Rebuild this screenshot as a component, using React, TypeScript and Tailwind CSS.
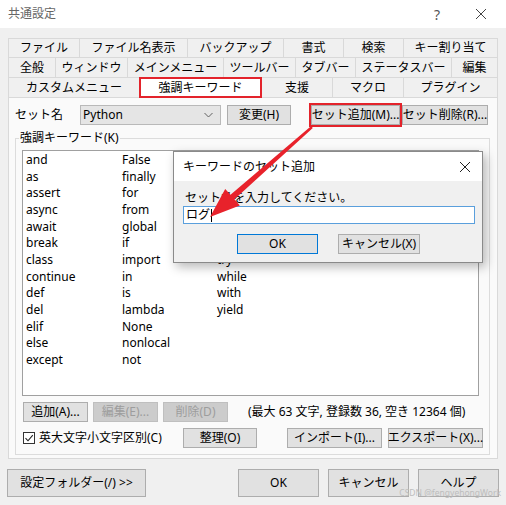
import React from "react";

const Btn = ({ w, children, disabled = false, h = "h-[20px]", extra = "" }: { w: string; children: React.ReactNode; disabled?: boolean; h?: string; extra?: string }) => (
  <div
    className={`${w} ${h} ${extra} flex items-center justify-center border whitespace-nowrap ${
      disabled ? "bg-[#cccccc] border-[#bfbfbf] text-[#9d9d9d]" : "bg-[#e1e1e1] border-[#adadad] text-black"
    }`}
  >
    {children}
  </div>
);

const row1 = [
  ["ファイル", "w-[71px]"],
  ["ファイル名表示", "w-[108px]"],
  ["バックアップ", "w-[96px]"],
  ["書式", "w-[60px]"],
  ["検索", "w-[60px]"],
  ["キー割り当て", "w-[95px]"],
];
const row2 = [
  ["全般", "w-[47px]"],
  ["ウィンドウ", "w-[72px]"],
  ["メインメニュー", "w-[96px]"],
  ["ツールバー", "w-[72px]"],
  ["タブバー", "w-[60px]"],
  ["ステータスバー", "w-[96px]"],
  ["編集", "w-[47px]"],
];

const col1 = ["and", "as", "assert", "async", "await", "break", "class", "continue", "def", "del", "elif", "else", "except"];
const col2 = ["False", "finally", "for", "from", "global", "if", "import", "in", "is", "lambda", "None", "nonlocal", "not"];
const col3 = ["or", "pass", "print", "raise", "return", "True", "try", "while", "with", "yield"];

export default function App() {
  return (
    <div className="relative w-[506px] h-[505px] overflow-hidden bg-[#f0f0f0] text-black text-[12px] font-['Noto_Sans','Noto_Sans_CJK_JP',sans-serif]">
      {/* Title bar */}
      <div className="h-[28px] bg-white flex items-center pl-[8px]">
        <span className="text-[12px] text-[#666]">共通設定</span>
        <span className="ml-auto text-[14px] text-[#555] w-[12px] text-center mr-[32px]">?</span>
        <svg width="12" height="12" viewBox="0 0 12 12" className="mr-[19px]">
          <path d="M1 1 L11 11 M11 1 L1 11" stroke="#444" strokeWidth="1" />
        </svg>
      </div>

      <div className="px-[8px] pt-[10px]">
        {/* Tabs */}
        <div className="flex h-[19px]">
          {row1.map(([t, w]) => (
            <div key={t} className={`${w} h-full border-l border-t border-[#d9d9d9] last:border-r flex items-center justify-center whitespace-nowrap`}>
              {t}
            </div>
          ))}
        </div>
        <div className="flex h-[20px]">
          {row2.map(([t, w]) => (
            <div key={t} className={`${w} h-full border-l border-t border-[#d9d9d9] last:border-r flex items-center justify-center whitespace-nowrap`}>
              {t}
            </div>
          ))}
        </div>
        <div className="flex h-[20px] items-start">
          <div className="w-[131px] h-[20px] border-l border-t border-[#d9d9d9] flex items-center justify-center">カスタムメニュー</div>
          <div className="w-[123px] h-[21px] -mb-px relative z-10 bg-white border-2 border-[#e3232b] flex items-center justify-center">強調キーワード</div>
          <div className="w-[70px] h-[20px] border-t border-[#d9d9d9] flex items-center justify-center">支援</div>
          <div className="w-[71px] h-[20px] border-l border-t border-[#d9d9d9] flex items-center justify-center">マクロ</div>
          <div className="w-[95px] h-[20px] border-l border-t border-r border-[#d9d9d9] flex items-center justify-center">プラグイン</div>
        </div>

        {/* Panel */}
        <div className="w-[490px] h-[362px] border border-[#d9d9d9] bg-[#fafafa]">
          <div className="flex items-center h-[24px] mt-[5px] pl-[6px]">
            <span className="w-[65px]">セット名</span>
            <div className="w-[141px] h-[20px] bg-[#e5e5e5] border border-[#b9b9b9] flex items-center pl-[2px] pr-[7px]">
              <span>Python</span>
              <svg width="9" height="6" viewBox="0 0 9 6" className="ml-auto">
                <path d="M0.5 1 L4.5 5 L8.5 1" stroke="#606060" strokeWidth="1" fill="none" />
              </svg>
            </div>
            <Btn w="w-[64px]" extra="ml-[6px]">変更(H)</Btn>
            <div className="ml-[18px] w-[93px] h-[24px] border-2 border-[#e3232b]">
              <Btn w="w-full" h="h-full">セット追加(M)...</Btn>
            </div>
            <Btn w="w-[86px]">セット削除(R)...</Btn>
          </div>

          {/* Group box */}
          <div className="relative mt-[11px] ml-[6px] w-[475px] border border-[#dcdcdc] pt-[11px] pl-[6px] pb-[6px]">
            <span className="absolute left-[3px] top-[-10px] bg-[#fafafa] px-[1px] leading-[18px]">強調キーワード(K)</span>
            <div className="w-[457px] h-[246px] border border-[#a0a0a0] bg-white flex pl-[3px] pt-px leading-[16.67px] overflow-hidden">
              <div className="w-[96px] flex flex-col">
                {col1.map((k) => <span key={k}>{k}</span>)}
              </div>
              <div className="w-[95px] flex flex-col">
                {col2.map((k) => <span key={k}>{k}</span>)}
              </div>
              <div className="flex flex-col">
                {col3.map((k) => <span key={k}>{k}</span>)}
              </div>
            </div>
            <div className="flex items-center h-[20px] mt-[6px] pl-px">
              <Btn w="w-[65px]">追加(A)...</Btn>
              <Btn w="w-[65px]" extra="ml-[5px]" disabled>編集(E)...</Btn>
              <Btn w="w-[65px]" extra="ml-[5px]" disabled>削除(D)</Btn>
              <span className="ml-[20px] whitespace-nowrap">(最大 63 文字, 登録数 36, 空き 12364 個)</span>
            </div>
            <div className="flex items-center h-[20px] mt-[6px] pl-px">
              <div className="w-[160px] flex items-center">
                <div className="w-[12px] h-[12px] border border-[#333] bg-white flex items-center justify-center">
                  <svg width="10" height="10" viewBox="0 0 10 10">
                    <path d="M1.5 5.2 L4 7.8 L8.8 2.2" stroke="#222" strokeWidth="1.1" fill="none" />
                  </svg>
                </div>
                <span className="ml-[4px] whitespace-nowrap">英大文字小文字区別(C)</span>
              </div>
              <Btn w="w-[74px]">整理(O)</Btn>
              <Btn w="w-[95px]" extra="ml-[30px]">インポート(I)...</Btn>
              <Btn w="w-[95px]" extra="ml-[6px]">エクスポート(X)...</Btn>
            </div>
          </div>
        </div>
      </div>

      {/* Bottom buttons */}
      <div className="flex mt-[10px] pl-[7px] h-[28px]">
        <Btn w="w-[139px]" h="h-[28px]">設定フォルダー(/) &gt;&gt;</Btn>
        <Btn w="w-[81px]" h="h-[28px]" extra="ml-[92px]">OK</Btn>
        <Btn w="w-[81px]" h="h-[28px]" extra="ml-[9px]">キャンセル</Btn>
        <Btn w="w-[81px]" h="h-[28px]" extra="ml-[9px]">ヘルプ</Btn>
      </div>

      {/* Dialog */}
      <div className="absolute left-[173px] top-[151px] w-[310px] h-[112px] border border-[#8a8a8a] bg-[#f0f0f0] shadow-[3px_4px_10px_rgba(0,0,0,0.28)] flex flex-col">
        <div className="h-[29px] bg-white flex items-center pl-[9px] pr-[11px]">
          <span>キーワードのセット追加</span>
          <svg width="12" height="12" viewBox="0 0 12 12" className="ml-auto">
            <path d="M1 1 L11 11 M11 1 L1 11" stroke="#222" strokeWidth="1" />
          </svg>
        </div>
        <div className="pl-[9px] pt-[8px]">
          <div className="pl-[2px] leading-[17px]">セット名を入力してください。</div>
          <div className="w-[292px] h-[18px] border border-[#5a9fdc] bg-white flex items-center pl-[2px] leading-[16px]">
            <span>ログ</span>
            <span className="w-px h-[13px] bg-black ml-px" />
          </div>
          <div className="flex mt-[10px]">
            <Btn w="w-[81px]" extra="ml-[54px] !border-[#0078d7]">OK</Btn>
            <Btn w="w-[82px]" extra="ml-[20px]">キャンセル(X)</Btn>
          </div>
        </div>
      </div>

      {/* Arrow annotation */}
      <svg className="absolute left-0 top-0 pointer-events-none" width="506" height="505" viewBox="0 0 506 505">
        <polygon
          points="312.8,127.9 234.5,199.35 239.8,205.4 210,217 225.2,188.9 230.5,194.85 311.2,126.1"
          fill="#e8222b"
        />
      </svg>

      {/* Watermark */}
      <span className="absolute right-[5px] top-[487px] text-[8.5px] text-[#bdbdbd] whitespace-nowrap leading-[12px]">
        CSDN @fengyehongWork
      </span>
    </div>
  );
}
